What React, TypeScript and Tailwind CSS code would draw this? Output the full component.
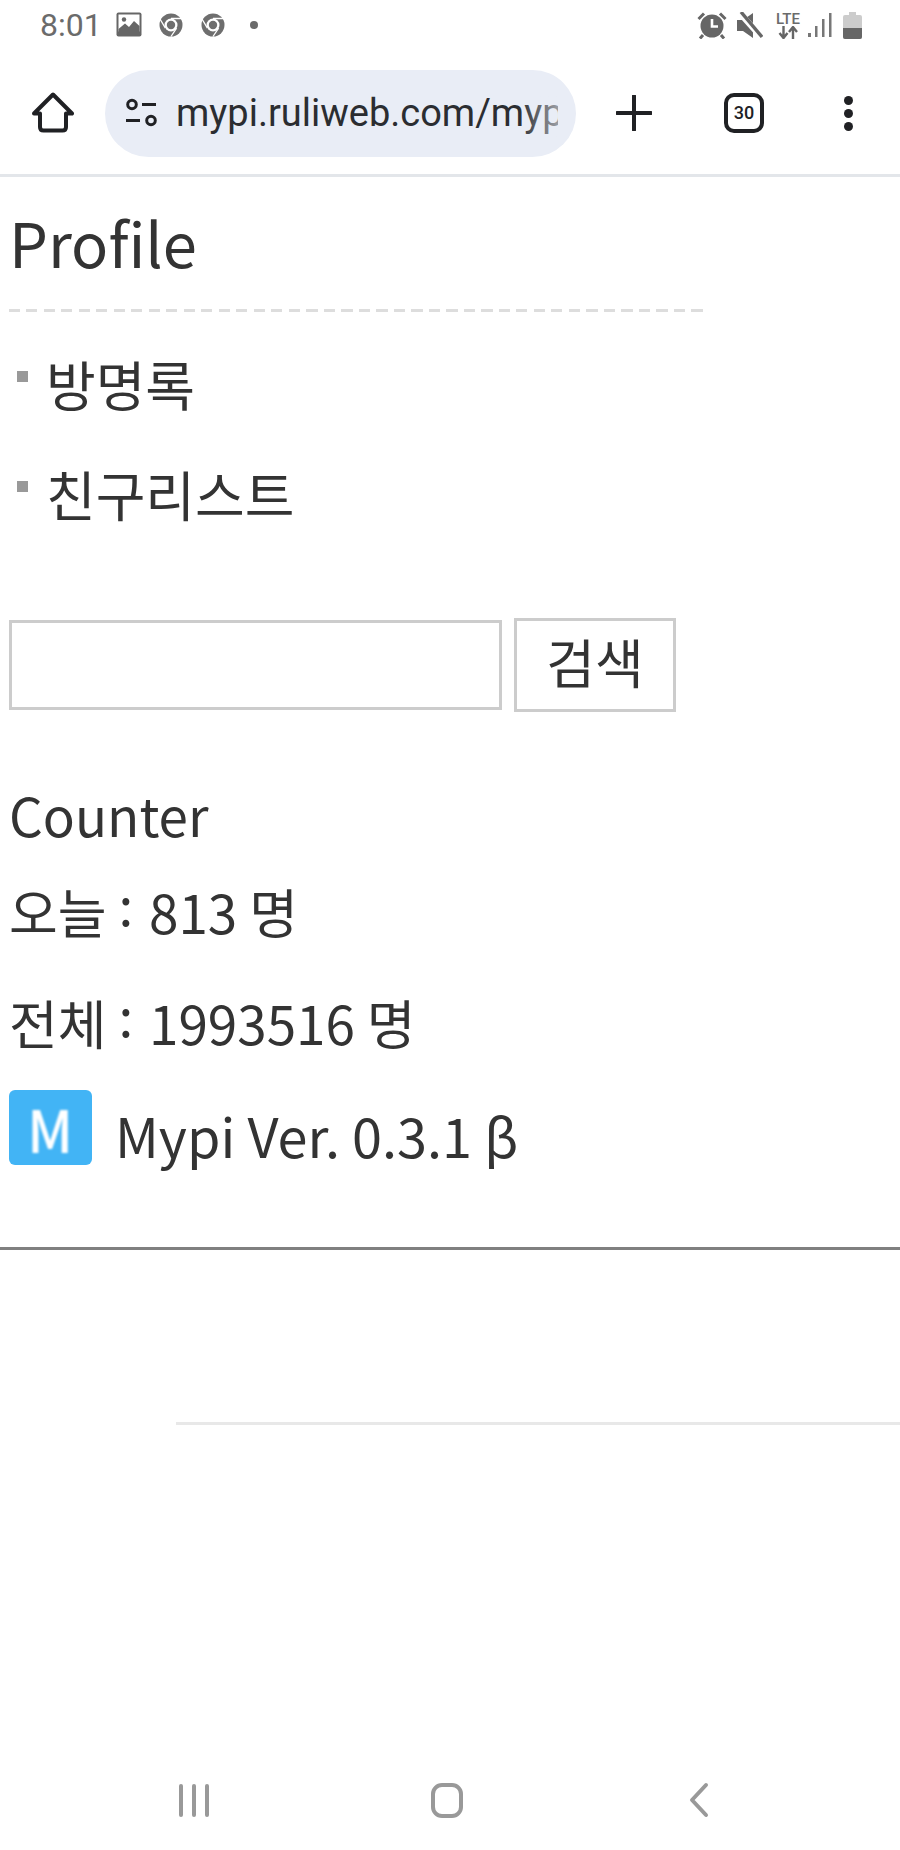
import React from 'react';

const krFont = "font-['Noto_Sans_CJK_KR','Noto_Sans',sans-serif]";

const StatusIcons = () => (
  <div className="flex items-center h-[50px] pl-[40px] pr-[38px] text-[#6b6b6b]">
    <span className="font-['Roboto',sans-serif] text-[32px] leading-none mr-[14px]">8:01</span>
    <svg width="26" height="26" viewBox="0 0 26 26" className="mr-[17px]">
      <rect x="0.5" y="0.5" width="25" height="24" rx="2" fill="#666" />
      <rect x="2.5" y="2.5" width="21" height="17" fill="#fff" />
      <circle cx="8" cy="7.5" r="2.2" fill="#666" />
      <path d="M2.5 20 L2.5 17 L9 11.5 L13 15 L18 9 L23.5 14 L23.5 20 Z" fill="#666" />
    </svg>
    <ChromeIcon className="mr-[18px]" />
    <ChromeIcon className="mr-[25px]" />
    <span className="w-[8px] h-[8px] rounded-full bg-[#6b6b6b]" />
    <div className="flex-1" />
    <svg width="30" height="28" viewBox="0 0 30 28" className="mr-[10px]">
      <circle cx="15" cy="15" r="11.5" fill="#666" />
      <path d="M15 8 V15.5 H21" fill="none" stroke="#fff" strokeWidth="2.6" />
      <path d="M1.5 8 L7 2.5 M28.5 8 L23 2.5 M6 24 L3 27.5 M24 24 L27 27.5" stroke="#666" strokeWidth="3" />
    </svg>
    <svg width="26" height="27" viewBox="0 0 26 27" className="mr-[12px]">
      <path d="M0 8 H6 L16 1 V26 L6 19 H0 Z" fill="#666" />
      <path d="M1 -1 L25 26" stroke="#fff" strokeWidth="6" />
      <path d="M4 0 L25 25" stroke="#666" strokeWidth="3.4" />
    </svg>
    <div className="flex flex-col items-center w-[26px] mr-[7px]">
      <span className="font-['Roboto',sans-serif] text-[15px] leading-[14px] font-medium">LTE</span>
      <svg width="20" height="13" viewBox="0 0 20 13">
        <path d="M5.5 0 V11 M1.5 7 L5.5 12 L9.5 7" fill="none" stroke="#666" strokeWidth="2.4" />
        <path d="M15 13 V2 M11 6 L15 1 L19 6" fill="none" stroke="#666" strokeWidth="2.4" />
      </svg>
    </div>
    <svg width="24" height="26" viewBox="0 0 24 26" className="mr-[11px]">
      <rect x="0" y="21" width="3" height="4" fill="#777" />
      <rect x="7" y="14" width="2.5" height="11" fill="#777" />
      <rect x="14" y="7" width="2.5" height="18" fill="#777" />
      <rect x="21" y="1" width="2.5" height="24" fill="#777" />
    </svg>
    <svg width="19" height="27" viewBox="0 0 19 27">
      <path d="M6 0 H13 V3 H17 Q19 3 19 5 V25 Q19 27 17 27 H2 Q0 27 0 25 V5 Q0 3 2 3 H6 Z" fill="#ccc" />
      <path d="M0 16 H19 V25 Q19 27 17 27 H2 Q0 27 0 25 Z" fill="#666" />
    </svg>
  </div>
);

const ChromeIcon = ({ className }: { className?: string }) => (
  <svg width="24" height="24" viewBox="0 0 24 24" className={className}>
    <circle cx="12" cy="12" r="11.5" fill="#6e6e6e" />
    <circle cx="12" cy="12" r="6.5" fill="#fff" />
    <circle cx="12" cy="12" r="4.2" fill="#6e6e6e" />
    <path d="M12 5.5 H23 M6.4 15.2 L1 6 M17.6 15.2 L12 23.5" stroke="#fff" strokeWidth="1.3" />
  </svg>
);

const Toolbar = () => (
  <div className="flex items-center h-[127px] border-b-[3px] border-[#e3e6ea] pt-[5px] pb-[3px]">
    <svg width="42" height="42" viewBox="0 0 42 42" className="ml-[32px] mr-[31px]">
      <path d="M2 21.5 L21 2.5 L40 21.5 H34 V35 Q34 38.5 30.5 38.5 H11.5 Q8 38.5 8 35 V21.5 Z" fill="none" stroke="#202124" strokeWidth="4" strokeLinejoin="round" />
    </svg>
    <div className="relative flex items-center w-[471px] h-[87px] rounded-[44px] bg-[#e9edf6] pl-[20px]">
      <svg width="34" height="30" viewBox="0 0 34 30" className="shrink-0">
        <circle cx="7" cy="6.5" r="4.3" fill="none" stroke="#202124" strokeWidth="3" />
        <path d="M17 6.5 H31 M1 22.5 H15" stroke="#202124" strokeWidth="3.2" />
        <circle cx="26" cy="22.5" r="4.3" fill="none" stroke="#202124" strokeWidth="3" />
      </svg>
      <span className="ml-[17px] w-[382px] overflow-hidden whitespace-nowrap font-['Roboto',sans-serif] text-[38px] leading-[46px] text-[#2b2d31]">
        mypi.ruliweb.com/myp
      </span>
      <span className="absolute right-[17px] top-[20px] w-[40px] h-[50px] bg-gradient-to-r from-transparent to-[#e9edf6] opacity-60" />
    </div>
    <svg width="36" height="36" viewBox="0 0 36 36" className="ml-[40px]">
      <path d="M18 1 V35 M1 18 H35" stroke="#202124" strokeWidth="4" strokeLinecap="round" />
    </svg>
    <div className="ml-[72px] flex items-center justify-center w-[40px] h-[40px] rounded-[10px] border-[4px] border-[#202124] font-['Roboto',sans-serif] font-medium text-[18px] leading-none text-[#202124]">
      30
    </div>
    <div className="ml-[80px] flex flex-col gap-[4px]">
      <span className="w-[9px] h-[9px] rounded-full bg-[#202124]" />
      <span className="w-[9px] h-[9px] rounded-full bg-[#202124]" />
      <span className="w-[9px] h-[9px] rounded-full bg-[#202124]" />
    </div>
  </div>
);

const MenuItem = ({ label }: { label: string }) => (
  <li className="flex items-center h-[110px] pl-[17px]">
    <span className="w-[11px] h-[11px] bg-[#999] blur-[0.5px] mb-[16px] mr-[18px]" />
    <span className="text-[54px] leading-none">{label}</span>
  </li>
);

const App = () => {
  return (
    <div className={`relative w-[900px] h-[1850px] bg-white overflow-hidden text-[#333] ${krFont}`}>
      <StatusIcons />
      <Toolbar />

      <h2 className="h-[132px] pl-[9px] pt-[25px] text-[61.5px] leading-[80px] font-normal">Profile</h2>
      <div className="ml-[9px] w-[694px] h-[3px] bg-[repeating-linear-gradient(90deg,#ddd_0,#ddd_11px,transparent_11px,transparent_17.5px)]" />

      <ul className="mt-[17px]">
        <MenuItem label="방명록" />
        <MenuItem label="친구리스트" />
      </ul>

      <form className="flex items-center mt-[69px] pl-[9px]">
        <input className="w-[493px] h-[90px] border-[3px] border-[#ccc] outline-none bg-white" />
        <button type="button" className="ml-[12px] w-[162px] h-[94px] pb-[8px] border-[3px] border-[#ccc] bg-white text-[53px] leading-none">
          검색
        </button>
      </form>

      <div className="mt-[57px] pl-[9px] text-[53px]">
        <p className="h-[90px] leading-[90px]">Counter</p>
        <p className="h-[88px] leading-[88px]">
          오늘 <span className="align-[8px] mr-[4px]">:</span> 813 명
        </p>
        <p className="h-[134px] leading-[134px]">
          전체 <span className="align-[8px] mr-[4px]">:</span> 1993516 명
        </p>
      </div>

      <div className="flex items-start pl-[9px] h-[76px] mt-[9px]">
        <div className="flex items-center justify-center w-[83px] h-[75px] rounded-[6px] bg-[#42b4f5] shrink-0">
          <span className="text-[58px] font-medium leading-none text-white blur-[1px] scale-x-[0.95]">M</span>
        </div>
        <span className="ml-[23px] mt-[18px] text-[54px] leading-none">Mypi Ver. 0.3.1 β</span>
      </div>

      <hr className="mt-[81px] border-0 h-[3px] bg-[#808080]" />

      <div className="ml-[176px] mt-[172px] h-[3px] bg-[#e8e8e8]" />

      <div className="absolute left-0 right-0 top-[1782px] flex items-center h-[36px] text-[#999]">
        <div className="ml-[179px] flex gap-[9px]">
          <span className="w-[4px] h-[33px] rounded bg-[#999]" />
          <span className="w-[4px] h-[33px] rounded bg-[#999]" />
          <span className="w-[4px] h-[33px] rounded bg-[#999]" />
        </div>
        <div className="ml-[222px] w-[32px] h-[35px] rounded-[11px] border-[4px] border-[#999]" />
        <svg width="20" height="36" viewBox="0 0 20 36" className="ml-[226px]">
          <path d="M17 3 L3 18 L17 33" fill="none" stroke="#999" strokeWidth="4" strokeLinecap="round" strokeLinejoin="round" />
        </svg>
      </div>
    </div>
  );
};

export default App;
